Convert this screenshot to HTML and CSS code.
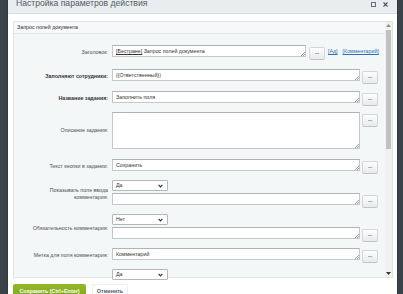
FILE: index.html
```html
<!DOCTYPE html>
<html lang="ru">
<head>
<meta charset="utf-8">
<title>Настройка параметров действия</title>
<link rel="stylesheet" href="styles.css">
</head>
<body>
<div class="dialog">
  <div class="titlebar">
    <div class="title">Настройка параметров действия</div>
    <div class="title-icons">
      <svg class="ico" width="5" height="5" viewBox="0 0 5 5"><rect x="0.5" y="0.5" width="4" height="4" fill="none" stroke="#6b7379" stroke-width="1"/></svg>
      <svg class="ico" width="5" height="5" viewBox="0 0 5 5"><path d="M0.5 0.5L4.5 4.5M4.5 0.5L0.5 4.5" stroke="#4f575d" stroke-width="1.1"/></svg>
    </div>
  </div>
  <div class="content">
    <div class="panel">
      <div class="panel-main">
        <div class="panel-head">Запрос полей документа</div>
        <div class="form">
          <div class="row row-first">
            <div class="label">Заголовок:</div>
            <div class="value">
              <div class="field field-short"><span class="ulink">[Бестране]</span> Запрос полей документа</div>
              <span class="dots">...</span>
              <span class="links"><a class="link">[Ад]</a><a class="link">[Комментарий]</a></span>
            </div>
          </div>
          <div class="row row-second">
            <div class="label label-bold">Заполняют сотрудники:</div>
            <div class="value">
              <div class="field">{{Ответственный}}</div>
              <span class="dots">...</span>
            </div>
          </div>
          <div class="row">
            <div class="label label-bold">Название задания:</div>
            <div class="value">
              <div class="field">Заполнить поля</div>
              <span class="dots">...</span>
            </div>
          </div>
          <div class="row row-tall">
            <div class="label">Описание задания:</div>
            <div class="value">
              <div class="field field-area"></div>
              <span class="dots">...</span>
            </div>
          </div>
          <div class="row">
            <div class="label">Текст кнопки в задании:</div>
            <div class="value">
              <div class="field">Сохранить</div>
              <span class="dots">...</span>
            </div>
          </div>
          <div class="row">
            <div class="label">Показывать поле ввода<br>комментария:</div>
            <div class="value value-col">
              <div class="select">Да<svg class="chev" width="5" height="4" viewBox="0 0 5 4"><path d="M0.6 0.8L2.5 2.9L4.4 0.8" fill="none" stroke="#333" stroke-width="1.2"/></svg></div>
              <div class="value">
                <div class="field"></div>
                <span class="dots">...</span>
              </div>
            </div>
          </div>
          <div class="row">
            <div class="label">Обязательность комментария:</div>
            <div class="value value-col">
              <div class="select">Нет<svg class="chev" width="5" height="4" viewBox="0 0 5 4"><path d="M0.6 0.8L2.5 2.9L4.4 0.8" fill="none" stroke="#333" stroke-width="1.2"/></svg></div>
              <div class="value">
                <div class="field"></div>
                <span class="dots">...</span>
              </div>
            </div>
          </div>
          <div class="row">
            <div class="label">Метка для поля комментария:</div>
            <div class="value">
              <div class="field">Комментарий</div>
              <span class="dots">...</span>
            </div>
          </div>
          <div class="row">
            <div class="label"></div>
            <div class="value">
              <div class="select">Да<svg class="chev" width="5" height="4" viewBox="0 0 5 4"><path d="M0.6 0.8L2.5 2.9L4.4 0.8" fill="none" stroke="#333" stroke-width="1.2"/></svg></div>
            </div>
          </div>
        </div>
      </div>
      <div class="scrollbar">
        <svg class="arrow" width="5" height="3" viewBox="0 0 5 3"><path d="M0 3L2.5 0L5 3Z" fill="#8a9094"/></svg>
        <div class="thumb-area"><div class="thumb"></div></div>
        <svg class="arrow" width="5" height="3" viewBox="0 0 5 3"><path d="M0 0L5 0L2.5 3Z" fill="#333"/></svg>
      </div>
    </div>
  </div>
  <div class="footer">
    <span class="btn btn-save">Сохранить (Ctrl+Enter)</span>
    <span class="btn btn-cancel">Отменить</span>
  </div>
</div>
</body>
</html>
```

FILE: styles.css
```css
html, body {
  margin: 0;
  padding: 0;
}
body {
  width: 403px;
  height: 294px;
  overflow: hidden;
  background: #3b434a;
  font-family: "Liberation Sans", Arial, sans-serif;
  color: #333;
}
.dialog {
  margin-left: 8px;
  width: 389px;
  height: 294px;
  background: #fff;
  display: flex;
  flex-direction: column;
  box-shadow: 0 0 2px rgba(0,0,0,0.4);
}
.titlebar {
  height: 13px;
  flex: none;
  background: #e8edef;
  border-bottom: 1px solid #d9dee1;
  display: flex;
  align-items: flex-start;
  justify-content: space-between;
  overflow: hidden;
}
.title {
  margin: -2px 0 0 8px;
  font-size: 8.6px;
  line-height: 10px;
  color: #535c64;
}
.title-icons {
  display: flex;
  gap: 7px;
  margin: 2px 9px 0 0;
}
.ico { display: block; }
.content {
  padding: 7px 4px 0 5px;
  flex: none;
}
.panel {
  height: 255px;
  border: 1px solid #dfe4e6;
  background: #f4f7f8;
  display: flex;
}
.panel-main {
  flex: 1;
  display: flex;
  flex-direction: column;
}
.panel-head {
  height: 11px;
  border-bottom: 1px solid #e3e7e9;
  padding-left: 3px;
  font-size: 5.3px;
  line-height: 11px;
  color: #333;
  background: #f6f8f9;
}
.form {
  padding-top: 11px;
  display: flex;
  flex-direction: column;
  gap: 6px;
}
.row {
  display: flex;
  align-items: center;
}
.row-first { margin-bottom: 3px; }
.row-second { margin-bottom: 1px; }
.row-tall { margin-bottom: 4px; }
.label {
  width: 94px;
  flex: none;
  text-align: right;
  font-size: 5.3px;
  line-height: 7px;
  color: #4a5056;
  margin-right: 4px;
}
.label-bold {
  font-weight: bold;
  color: #333;
}
.value {
  display: flex;
  align-items: flex-start;
  gap: 2px;
}
.value-col {
  flex-direction: column;
  gap: 2px;
}
.field {
  position: relative;
  box-sizing: border-box;
  width: 248px;
  height: 12px;
  background: #fff;
  border: 1px solid #c3c8cb;
  border-top-color: #aeb3b6;
  padding: 0 3px;
  font-size: 5.3px;
  line-height: 10px;
  color: #333;
  white-space: nowrap;
}
.field::after {
  content: "";
  position: absolute;
  right: 0;
  bottom: 0;
  width: 4px;
  height: 4px;
  background: linear-gradient(135deg, transparent 40%, #a0a5a8 40%, #a0a5a8 52%, transparent 52%, transparent 70%, #a0a5a8 70%, #a0a5a8 82%, transparent 82%);
}
.field-short { width: 194px; }
.field-area { height: 37px; }
.ulink {
  text-decoration: underline;
  color: #333;
}
.dots {
  box-sizing: border-box;
  width: 16px;
  height: 13px;
  margin-top: 2px;
  border: 1px solid #d3d7da;
  border-bottom-color: #bfc4c7;
  border-radius: 2px;
  background: linear-gradient(#fdfdfd, #e7eaec);
  font-size: 5px;
  font-weight: bold;
  line-height: 9px;
  text-align: center;
  color: #555;
  flex: none;
}
.field-short + .dots { margin-left: 1px; }
.links {
  display: flex;
  gap: 5px;
  margin-left: 1px;
  margin-top: 3px;
}
.link {
  font-size: 5.3px;
  line-height: 7px;
  color: #2a6fb6;
  text-decoration: underline;
}
.select {
  box-sizing: border-box;
  width: 56px;
  height: 11px;
  border: 1px solid #b3b8bb;
  border-radius: 1px;
  background: #fff;
  padding: 0 4px 0 3px;
  font-size: 5.3px;
  line-height: 9px;
  color: #333;
  display: flex;
  align-items: center;
  justify-content: space-between;
}
.chev { display: block; }
.scrollbar {
  width: 7px;
  flex: none;
  background: #f1f1f1;
  display: flex;
  flex-direction: column;
  align-items: center;
  padding: 2px 0;
  box-sizing: border-box;
}
.arrow { display: block; flex: none; }
.thumb-area {
  flex: 1;
  width: 100%;
  padding: 3px 0 0;
  box-sizing: border-box;
}
.thumb {
  margin: 0 auto;
  width: 5px;
  height: 119px;
  background: #c1c1c1;
}
.footer {
  display: flex;
  gap: 6px;
  padding: 6px 0 0 5px;
}
.btn {
  box-sizing: border-box;
  height: 14px;
  border-radius: 2px;
  font-size: 5.4px;
  font-weight: bold;
  line-height: 14px;
  text-align: center;
}
.btn-save {
  width: 73px;
  background: linear-gradient(#93b92a, #7fa718);
  color: #fff;
}
.btn-cancel {
  width: 36px;
  background: #fff;
  color: #535c69;
  border: 1px solid #eceeef;
  line-height: 12px;
}
```
